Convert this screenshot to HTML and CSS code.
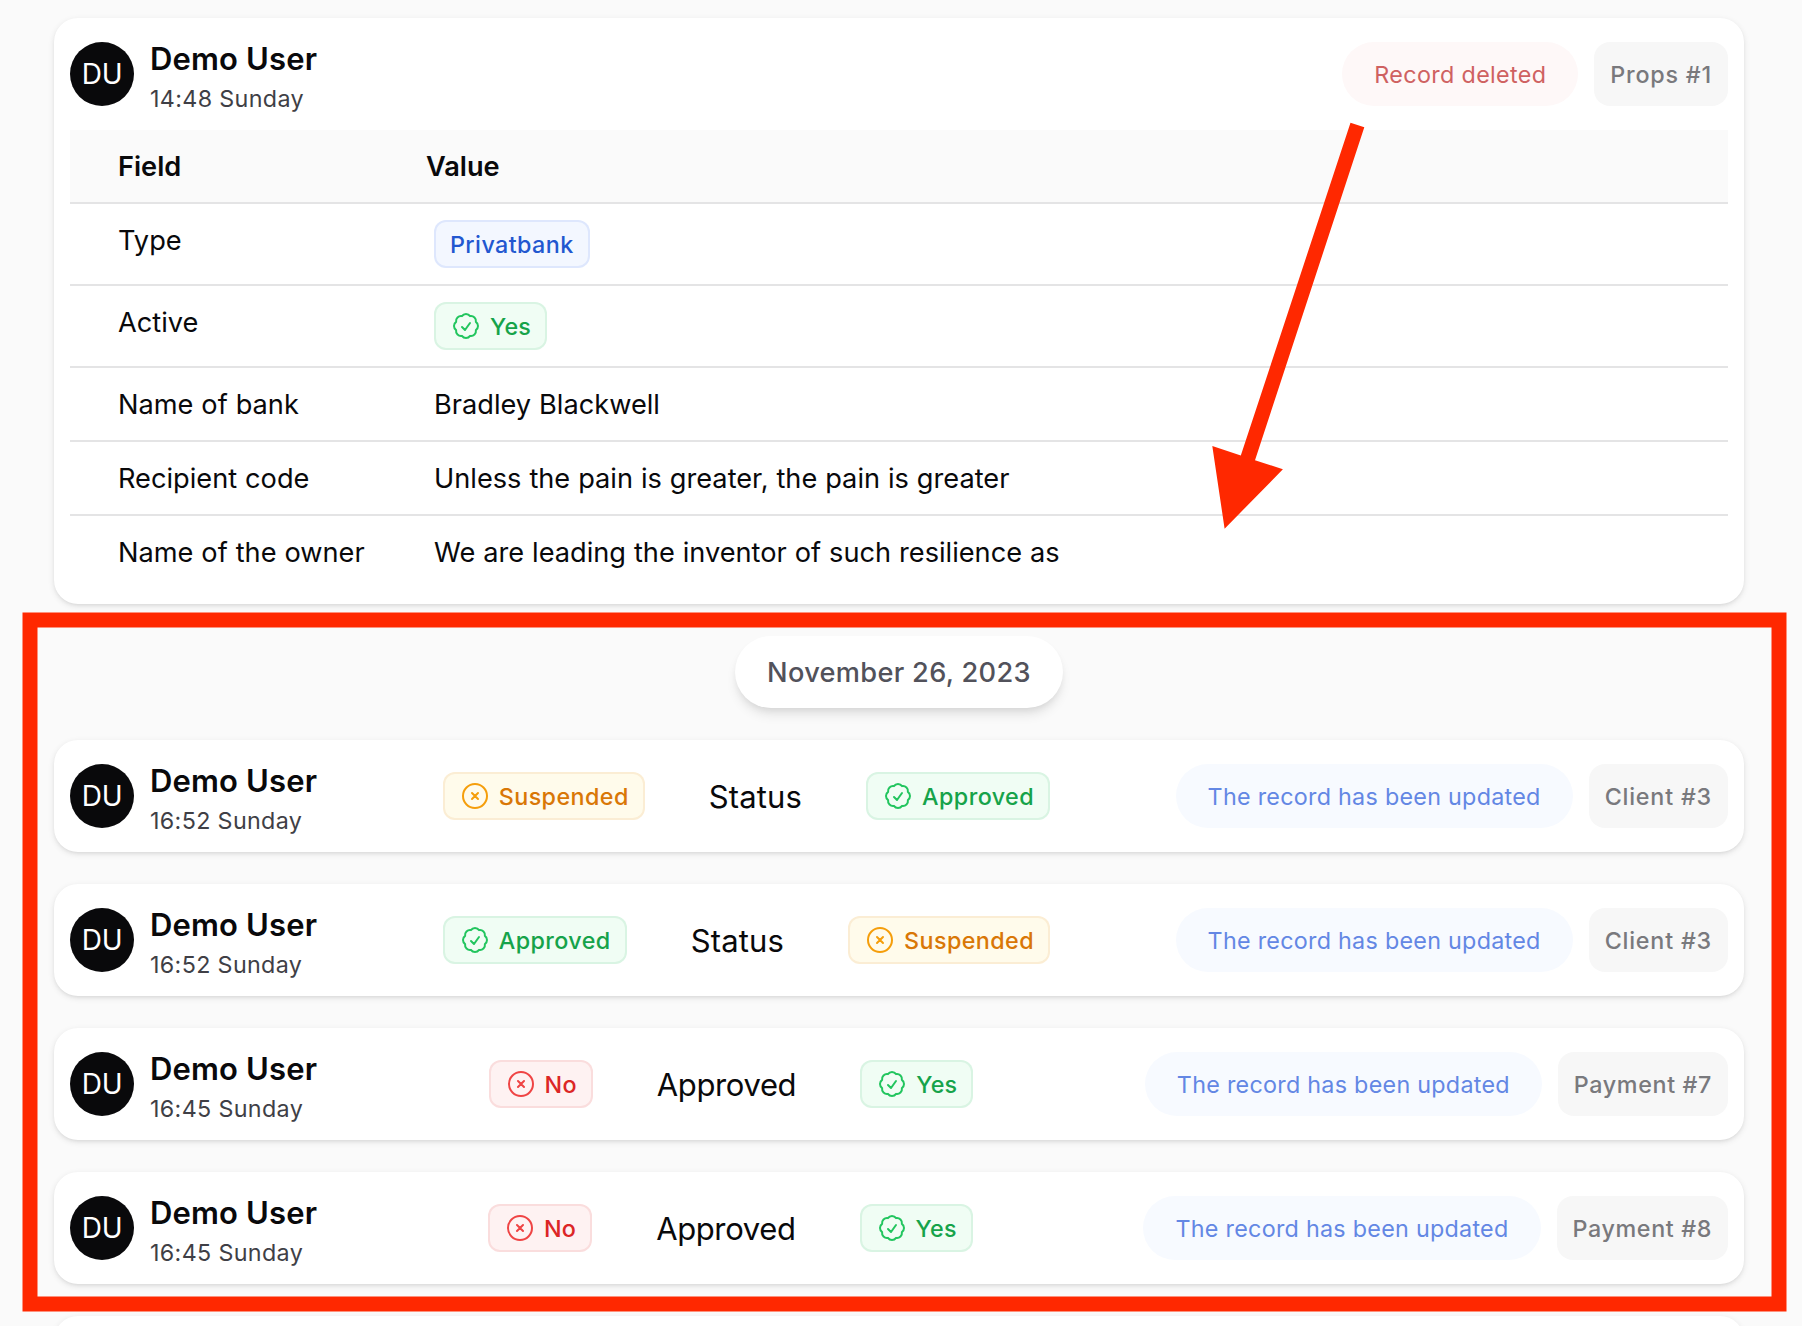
FILE: index.html
```html
<!DOCTYPE html>
<html lang="en">
<head>
<meta charset="utf-8">
<title>Activity log</title>
<link rel="stylesheet" href="styles.css">
</head>
<body>
<svg class="sprite" aria-hidden="true">
  <symbol id="check-badge" viewBox="0 0 24 24"><path d="M9 12.75 11.25 15 15 9.75M21 12c0 1.268-.63 2.39-1.593 3.068a3.745 3.745 0 0 1-1.043 3.296 3.745 3.745 0 0 1-3.296 1.043A3.745 3.745 0 0 1 12 21c-1.268 0-2.39-.63-3.068-1.593a3.746 3.746 0 0 1-3.296-1.043 3.745 3.745 0 0 1-1.043-3.296A3.745 3.745 0 0 1 3 12c0-1.268.63-2.39 1.593-3.068a3.745 3.745 0 0 1 1.043-3.296 3.746 3.746 0 0 1 3.296-1.043A3.746 3.746 0 0 1 12 3c1.268 0 2.39.63 3.068 1.593a3.746 3.746 0 0 1 3.296 1.043 3.746 3.746 0 0 1 1.043 3.296A3.745 3.745 0 0 1 21 12Z"/></symbol>
  <symbol id="x-circle" viewBox="0 0 24 24"><path d="m9.75 9.75 4.5 4.5m0-4.5-4.5 4.5M21 12a9 9 0 1 1-18 0 9 9 0 0 1 18 0Z"/></symbol>
</svg>

<main class="log">
  <article class="card">
    <header class="entry">
      <div class="user">
        <div class="avatar">DU</div>
        <div class="who"><div class="name">Demo User</div><div class="time">14:48 Sunday</div></div>
      </div>
      <div class="meta">
        <span class="event event-deleted">Record deleted</span>
        <span class="subject">Props #1</span>
      </div>
    </header>
    <div class="table">
      <div class="row head"><div>Field</div><div>Value</div></div>
      <div class="row"><div>Type</div><div class="value"><span class="badge primary">Privatbank</span></div></div>
      <div class="row"><div>Active</div><div class="value"><span class="badge success short"><svg class="icon"><use href="#check-badge"/></svg>Yes</span></div></div>
      <div class="row"><div>Name of bank</div><div class="value">Bradley Blackwell</div></div>
      <div class="row"><div>Recipient code</div><div class="value">Unless the pain is greater, the pain is greater</div></div>
      <div class="row"><div>Name of the owner</div><div class="value">We are leading the inventor of such resilience as</div></div>
    </div>
  </article>

  <div class="date">November 26, 2023</div>

  <article class="card entry">
    <div class="user">
      <div class="avatar">DU</div>
      <div class="who"><div class="name">Demo User</div><div class="time">16:52 Sunday</div></div>
    </div>
    <div class="change">
      <span class="badge warning"><svg class="icon"><use href="#x-circle"/></svg>Suspended</span>
      <span class="field">Status</span>
      <span class="badge success"><svg class="icon"><use href="#check-badge"/></svg>Approved</span>
    </div>
    <div class="meta">
      <span class="event event-updated">The record has been updated</span>
      <span class="subject">Client #3</span>
    </div>
  </article>

  <article class="card entry">
    <div class="user">
      <div class="avatar">DU</div>
      <div class="who"><div class="name">Demo User</div><div class="time">16:52 Sunday</div></div>
    </div>
    <div class="change">
      <span class="badge success"><svg class="icon"><use href="#check-badge"/></svg>Approved</span>
      <span class="field">Status</span>
      <span class="badge warning"><svg class="icon"><use href="#x-circle"/></svg>Suspended</span>
    </div>
    <div class="meta">
      <span class="event event-updated">The record has been updated</span>
      <span class="subject">Client #3</span>
    </div>
  </article>

  <article class="card entry">
    <div class="user">
      <div class="avatar">DU</div>
      <div class="who"><div class="name">Demo User</div><div class="time">16:45 Sunday</div></div>
    </div>
    <div class="change">
      <span class="badge danger short"><svg class="icon"><use href="#x-circle"/></svg>No</span>
      <span class="field tight">Approved</span>
      <span class="badge success short"><svg class="icon"><use href="#check-badge"/></svg>Yes</span>
    </div>
    <div class="meta">
      <span class="event event-updated">The record has been updated</span>
      <span class="subject subject-long">Payment #7</span>
    </div>
  </article>

  <article class="card entry">
    <div class="user">
      <div class="avatar">DU</div>
      <div class="who"><div class="name">Demo User</div><div class="time">16:45 Sunday</div></div>
    </div>
    <div class="change">
      <span class="badge danger short"><svg class="icon"><use href="#x-circle"/></svg>No</span>
      <span class="field tight">Approved</span>
      <span class="badge success short"><svg class="icon"><use href="#check-badge"/></svg>Yes</span>
    </div>
    <div class="meta">
      <span class="event event-updated">The record has been updated</span>
      <span class="subject subject-long">Payment #8</span>
    </div>
  </article>

  <article class="card card-next"></article>
</main>

<svg class="annotation" viewBox="0 0 1802 1326" aria-hidden="true">
  <rect x="30" y="620" width="1749" height="684"/>
  <polygon points="1350.5,122.8 1364.3,127.2 1255,460.2 1282.9,469.3 1224.6,528.7 1212.3,446 1240.8,455.5"/>
</svg>
</body>
</html>
```
FILE: styles.css
```css
*,
*::before,
*::after {
  box-sizing: border-box;
}

body {
  position: relative;
  margin: 0;
  background: #fafafa;
  color: #09090b;
  font-family: Inter, "Liberation Sans", sans-serif;
  -webkit-font-smoothing: antialiased;
}

.sprite {
  display: none;
}

.log {
  display: flex;
  flex-direction: column;
  gap: 32px;
  height: 1326px;
  overflow: hidden;
  padding: 18px 58px 0 54px;
}

.card {
  flex-shrink: 0;
  padding: 16px;
  border-radius: 24px;
  background: #fff;
  box-shadow: 0 2px 6px rgb(0 0 0 / 0.1), 0 2px 4px -2px rgb(0 0 0 / 0.1);
}

.card-next {
  height: 48px;
}

.entry {
  display: flex;
  align-items: center;
  justify-content: space-between;
}

.user {
  display: flex;
  align-items: center;
  gap: 16px;
  height: 80px;
}

.avatar {
  width: 64px;
  height: 64px;
  border-radius: 50%;
  background: #09090b;
  color: #fff;
  font-size: 28px;
  line-height: 65px;
  text-align: center;
  letter-spacing: -0.2px;
}

.who {
  padding-top: 2px;
}

.name {
  font-size: 31px;
  font-weight: 600;
  line-height: 48px;
  letter-spacing: 0.15px;
}

.time {
  color: #3f3f46;
  font-size: 23.3px;
  line-height: 32px;
  letter-spacing: 0.34px;
}

.meta {
  display: flex;
  gap: 16px;
  font-size: 23.3px;
  line-height: 32px;
}

.event {
  padding: 17px 32px 15px;
  border-radius: 32px;
}

.event-deleted {
  background: #fef8f8;
  color: #cf6161;
  letter-spacing: 0.35px;
}

.event-updated {
  background: #f7faff;
  color: #6387e4;
  letter-spacing: 0.28px;
}

.subject {
  padding: 17px 16px 15px;
  border-radius: 16px;
  background: #f7f7f7;
  color: #79797d;
  font-weight: 500;
  letter-spacing: 0.8px;
}

.subject-long {
  letter-spacing: 0.63px;
}

.change {
  display: flex;
  align-items: center;
  gap: 64px;
}

.field {
  padding-top: 2px;
  font-size: 31px;
  line-height: 48px;
  letter-spacing: 0.16px;
}

.field.tight {
  letter-spacing: -0.37px;
}

.badge {
  display: flex;
  align-items: center;
  gap: 8px;
  width: max-content;
  padding: 9px 16px 7px;
  border-radius: 12px;
  font-size: 23.3px;
  font-weight: 500;
  line-height: 32px;
  letter-spacing: 0.42px;
}

.badge.short {
  letter-spacing: 0.25px;
}

.icon {
  width: 32px;
  height: 32px;
  margin: -1px 0 1px;
  fill: none;
  stroke: currentColor;
  stroke-width: 1.5;
  stroke-linecap: round;
  stroke-linejoin: round;
}

.primary {
  background: #f3f7ff;
  color: #2257d0;
  box-shadow: inset 0 0 0 2px rgb(37 99 235 / 0.1);
}

.success {
  background: #f0fdf4;
  color: #16a34a;
  box-shadow: inset 0 0 0 2px rgb(22 163 74 / 0.1);
}

.success .icon {
  color: #22c55e;
}

.warning {
  background: #fffbeb;
  color: #d97706;
  box-shadow: inset 0 0 0 2px rgb(217 119 6 / 0.1);
}

.warning .icon {
  color: #f59e0b;
}

.danger {
  background: #fef2f2;
  color: #dc2626;
  box-shadow: inset 0 0 0 2px rgb(220 38 38 / 0.1);
}

.danger .icon {
  color: #ef4444;
}

.table {
  margin-top: 16px;
}

.row {
  display: grid;
  grid-template-columns: 308px 1fr;
  padding: 17px 48px 15px;
  border-bottom: 2px solid #e4e4e5;
  font-size: 27.2px;
  line-height: 40px;
  word-spacing: 0.3px;
}

.row:last-child {
  border-bottom: 0;
}

.row .badge {
  margin: -1px 0 1px;
}

.head {
  background: #fafafa;
  font-weight: 600;
}

.value {
  padding-left: 8px;
}

.date {
  align-self: center;
  padding: 17px 32px 15px;
  border-radius: 36px;
  background: #fff;
  box-shadow: 0 8px 12px -2px rgb(0 0 0 / 0.1), 0 4px 8px -4px rgb(0 0 0 / 0.1);
  color: #52525b;
  font-size: 27.2px;
  font-weight: 500;
  line-height: 40px;
  letter-spacing: 0.31px;
}

.annotation {
  position: absolute;
  top: 0;
  left: 0;
  width: 1802px;
  height: 1326px;
  pointer-events: none;
}

.annotation rect {
  fill: none;
  stroke: #ff2800;
  stroke-width: 15;
}

.annotation polygon {
  fill: #ff2800;
}
```
